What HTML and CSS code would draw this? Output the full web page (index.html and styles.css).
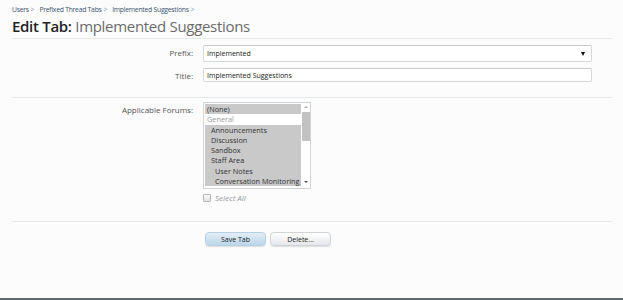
FILE: index.html
```html
<!DOCTYPE html>
<html>
<head>
<meta charset="utf-8">
<link rel="stylesheet" href="styles.css">
</head>
<body>
<div class="page">
  <div class="crumbs">
    <a>Users</a><span class="sep">&gt;</span>
    <a>Prefixed Thread Tabs</a><span class="sep">&gt;</span>
    <a>Implemented Suggestions</a><span class="sep">&gt;</span>
  </div>
  <h1 class="title"><b>Edit Tab:</b> Implemented Suggestions</h1>
  <div class="form">
    <div class="section">
      <div class="row">
        <label class="lbl">Prefix:</label>
        <div class="ctrl">
          <div class="select"><span>Implemented</span><span class="arrow"></span></div>
        </div>
      </div>
      <div class="row">
        <label class="lbl">Title:</label>
        <div class="ctrl">
          <div class="input">Implemented Suggestions</div>
        </div>
      </div>
    </div>
    <div class="section">
      <div class="row">
        <label class="lbl">Applicable Forums:</label>
        <div class="ctrl">
          <div class="listbox">
            <div class="options">
              <div class="opt sel">(None)</div>
              <div class="opt group">General</div>
              <div class="opt sel ind1">Announcements</div>
              <div class="opt sel ind1">Discussion</div>
              <div class="opt sel ind1">Sandbox</div>
              <div class="opt sel ind1">Staff Area</div>
              <div class="opt sel ind2">User Notes</div>
              <div class="opt sel ind2">Conversation Monitoring</div>
            </div>
            <div class="scroll">
              <span class="up"></span>
              <span class="thumb"></span>
              <span class="down"></span>
            </div>
          </div>
          <div class="selectall"><span class="cb"></span><i>Select All</i></div>
        </div>
      </div>
    </div>
    <div class="buttons">
      <span class="btn primary">Save Tab</span>
      <span class="btn">Delete...</span>
    </div>
  </div>
</div>
<div class="bottombar"></div>
</body>
</html>
```
FILE: styles.css
```css
html, body {
  margin: 0;
  padding: 0;
  background: #fcfcfd;
  height: 300px;
  overflow: hidden;
  font-family: "Open Sans", "Noto Sans", sans-serif;
}
body {
  display: flex;
  flex-direction: column;
}
.page {
  flex: 1;
  padding: 5px 11px 0 12px;
}
.crumbs {
  font-size: 6.8px;
  color: #3a5570;
  height: 10px;
  line-height: 10px;
  display: flex;
  gap: 2px;
  letter-spacing: -0.25px;
}
.crumbs .sep {
  color: #8a97a5;
  margin-right: 3px;
}
.title {
  margin: 0;
  font-size: 15px;
  font-weight: normal;
  color: #6b6b6b;
  line-height: 22px;
  height: 23px;
  border-bottom: 1px solid #e6e9ec;
  letter-spacing: -0.3px;
}
.title b {
  color: #222;
  font-weight: 600;
}
.section {
  border-bottom: 1px solid #e6e9ec;
  padding: 6px 0 0;
}
.section:first-child {
  height: 59px;
  box-sizing: border-box;
}
.section:nth-child(2) {
  height: 124px;
  box-sizing: border-box;
  padding-top: 4px;
}
.row {
  display: flex;
  gap: 10px;
  margin-bottom: 6px;
}
.lbl {
  width: 181px;
  text-align: right;
  font-size: 8px;
  color: #555;
  padding-top: 2px;
}
.ctrl {
  width: 389px;
}
.select, .input {
  box-sizing: border-box;
  border: 1px solid #d6d9dc;
  border-top-color: #c8cbce;
  border-radius: 2px;
  background: #fff;
  font-size: 7px;
  color: #222;
  padding: 0 0 0 3px;
  line-height: 13px;
  display: flex;
  justify-content: space-between;
  align-items: center;
}
.select {
  height: 17px;
}
.input {
  height: 14px;
}
.arrow {
  width: 0;
  height: 0;
  border-left: 2.5px solid transparent;
  border-right: 2.5px solid transparent;
  border-top: 4px solid #111;
  margin-right: 6px;
}
.listbox {
  width: 108px;
  height: 87px;
  box-sizing: border-box;
  border: 1px solid #d2d5d8;
  background: #fff;
  display: flex;
  padding: 1px 0 1px 1px;
}
.options {
  flex: 1;
  overflow: hidden;
  font-size: 7.3px;
  color: #333;
}
.opt {
  height: 10.3px;
  line-height: 10px;
  padding-left: 2px;
  white-space: nowrap;
}
.opt.sel {
  background: #c9c9c9;
}
.opt.group {
  color: #999;
}
.opt.ind1 { padding-left: 6px; }
.opt.ind2 { padding-left: 10px; }
.scroll {
  width: 9px;
  display: flex;
  flex-direction: column;
  align-items: center;
  background: #fff;
}
.scroll .up, .scroll .down {
  height: 8px;
  width: 0;
  position: relative;
}
.scroll .up::after, .scroll .down::after {
  content: "";
  position: absolute;
  left: -2px;
  top: 2px;
  border-left: 2px solid transparent;
  border-right: 2px solid transparent;
}
.scroll .up::after { border-bottom: 2px solid #aaa; }
.scroll .down { margin-top: auto; }
.scroll .down::after { border-top: 2px solid #555; }
.scroll .thumb {
  width: 8px;
  height: 29px;
  background: #c2c2c2;
}
.selectall {
  display: flex;
  align-items: center;
  gap: 4px;
  margin-top: 3px;
  font-size: 8px;
  color: #999;
}
.cb {
  width: 6px;
  height: 6px;
  border: 1px solid #b5b5b5;
  border-radius: 1px;
  background: linear-gradient(#fafafa, #e2e2e2);
}
.buttons {
  padding: 10px 0 0 193px;
  display: flex;
  gap: 4px;
}
.btn {
  width: 61px;
  height: 14px;
  box-sizing: border-box;
  border-radius: 4px;
  font-size: 7px;
  line-height: 13px;
  text-align: center;
  color: #222;
  border: 1px solid #d0d3d8;
  background: linear-gradient(#ffffff, #e6e7ec);
  box-shadow: 0 1px 1px rgba(0,0,0,0.12);
}
.btn.primary {
  border-color: #b7cfe0;
  background: linear-gradient(#e3eef7, #bcd6ea);
}
.bottombar {
  height: 2px;
  background: #5d6b6c;
}
```
